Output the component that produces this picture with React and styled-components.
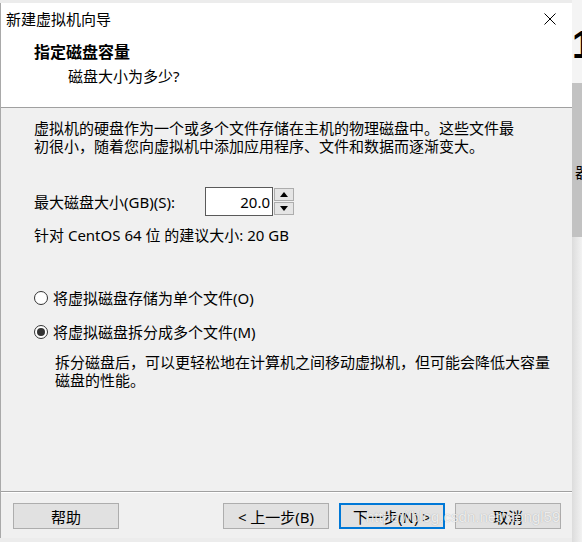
import React from 'react';
import styled, { createGlobalStyle } from 'styled-components';

const GlobalStyle = createGlobalStyle`
    body {
        margin: 0;
        font-family: "Noto Sans", "Noto Sans CJK SC", sans-serif;
        font-size: 15px;
        color: #000;
    }
`

const Page = styled.div`
    position: relative;
    width: 582px;
    height: 542px;
    display: flex;
    background: #ececec;
    overflow: hidden;
`
const Dialog = styled.div`
    margin-top: 3px;
    width: 572px;
    height: 535px;
    box-sizing: border-box;
    border-left: 1px solid #a9a9a9;
    background: #f0f0f0;
    display: flex;
    flex-direction: column;
`
const TitleBar = styled.div`
    height: 32px;
    background: #fff;
    display: flex;
    align-items: center;
    justify-content: space-between;
    padding-left: 5px;
`
const Title = styled.span`
    line-height: 18px;
`
const CloseButton = styled.div`
    width: 44px;
    height: 32px;
    display: flex;
    align-items: center;
    justify-content: center;
`
const Header = styled.div`
    height: 73px;
    box-sizing: border-box;
    background: #fff;
    border-bottom: 1px solid #a0a0a0;
    padding: 7px 0 0 33px;
`
const Heading = styled.div`
    font-weight: 700;
    font-size: 16px;
    line-height: 20px;
`
const SubHeading = styled.div`
    margin: 5px 0 0 34px;
    line-height: 18px;
`
const Body = styled.div`
    flex: 1;
    padding: 11px 0 0 33px;
`
const Text = styled.div`
    line-height: 18px;
    white-space: nowrap;
    margin-top: ${props => props.top || 0}px;
    margin-left: ${props => props.indent || 0}px;
`
const SizeRow = styled.div`
    margin-top: 32px;
    height: 29px;
    display: flex;
    align-items: center;
`
const SizeLabel = styled.span`
    width: 171px;
    white-space: nowrap;
`
const NumberBox = styled.div`
    width: 68px;
    height: 29px;
    box-sizing: border-box;
    border: 1px solid #5a5a5a;
    background: #fff;
    display: flex;
    align-items: center;
    justify-content: flex-end;
    padding-right: 2px;
`
const SpinColumn = styled.div`
    display: flex;
    flex-direction: column;
    gap: 1px;
    margin-left: 1px;
`
const SpinButton = styled.div`
    width: 20px;
    height: 13px;
    box-sizing: border-box;
    border: 1px solid #adadad;
    background: #e5e5e5;
    display: flex;
    align-items: center;
    justify-content: center;
`
const Option = styled.div`
    margin-top: ${props => props.top}px;
    display: flex;
    align-items: center;
    gap: 5px;
    line-height: 18px;
`
const Radio = styled.span`
    width: 14px;
    height: 14px;
    box-sizing: border-box;
    border-radius: 50%;
    border: 1px solid #333;
    background: #fff;
    display: flex;
    align-items: center;
    justify-content: center;
    &::after {
        content: '';
        width: 8px;
        height: 8px;
        border-radius: 50%;
        background: ${props => props.checked ? '#333' : 'transparent'};
    }
`
const Footer = styled.div`
    height: 47px;
    box-sizing: border-box;
    border-top: 1px solid #a0a0a0;
    box-shadow: inset 0 1px 0 #fff;
    padding: 11px 11px 0 12px;
    display: flex;
    gap: 10px;
`
const Button = styled.div`
    width: 106px;
    height: 26px;
    box-sizing: border-box;
    border: ${props => props.focused ? '2px solid #0078d7' : '1px solid #adadad'};
    background: #e1e1e1;
    display: flex;
    align-items: center;
    justify-content: center;
    white-space: nowrap;
    margin-left: ${props => props.push ? 'auto' : '0'};
`
const Watermark = styled.div`
    position: absolute;
    left: 366px;
    top: 508px;
    font-family: "Liberation Sans", sans-serif;
    font-size: 15px;
    color: rgba(255, 255, 255, 0.8);
    text-shadow: 0 0 1px rgba(0, 0, 0, 0.3);
    white-space: nowrap;
`
const Strip = styled.div`
    width: 10px;
    display: flex;
    flex-direction: column;
    overflow: hidden;
`
const StripTop = styled.div`
    height: 83px;
    background: #f4f4f4;
    font-family: "Liberation Sans", sans-serif;
    font-weight: 700;
    font-size: 38px;
    line-height: 38px;
    padding-top: 26px;
    box-sizing: border-box;
    white-space: nowrap;
`
const StripBand = styled.div`
    height: 154px;
    background: #c2c2c2;
    box-sizing: border-box;
    padding: 80px 0 0 3px;
    line-height: 18px;
    white-space: nowrap;
`
const StripRest = styled.div`
    flex: 1;
    background: linear-gradient(to right, #dcdcdc, #f2f2f2);
`

const Arrow = ({ up }) => (
    <svg width="8" height="5" viewBox="0 0 8 5">
        <path d={up ? 'M0 5 L4 0 L8 5 Z' : 'M0 0 L8 0 L4 5 Z'} fill="#000" />
    </svg>
)

const App = () => {
    return (
        <Page>
            <GlobalStyle />
            <Dialog>
                <TitleBar>
                    <Title>新建虚拟机向导</Title>
                    <CloseButton>
                        <svg width="12" height="12" viewBox="0 0 12 12">
                            <path d="M0.5 0.5 L11.5 11.5 M11.5 0.5 L0.5 11.5" stroke="#000" strokeWidth="1" />
                        </svg>
                    </CloseButton>
                </TitleBar>
                <Header>
                    <Heading>指定磁盘容量</Heading>
                    <SubHeading>磁盘大小为多少?</SubHeading>
                </Header>
                <Body>
                    <Text>
                        虚拟机的硬盘作为一个或多个文件存储在主机的物理磁盘中。这些文件最<br />
                        初很小，随着您向虚拟机中添加应用程序、文件和数据而逐渐变大。
                    </Text>
                    <SizeRow>
                        <SizeLabel>最大磁盘大小(GB)(S):</SizeLabel>
                        <NumberBox>20.0</NumberBox>
                        <SpinColumn>
                            <SpinButton><Arrow up /></SpinButton>
                            <SpinButton><Arrow /></SpinButton>
                        </SpinColumn>
                    </SizeRow>
                    <Text top={10}>针对 CentOS 64 位 的建议大小: 20 GB</Text>
                    <Option top={45}>
                        <Radio />
                        <span>将虚拟磁盘存储为单个文件(O)</span>
                    </Option>
                    <Option top={16}>
                        <Radio checked />
                        <span>将虚拟磁盘拆分成多个文件(M)</span>
                    </Option>
                    <Text top={12} indent={21}>
                        拆分磁盘后，可以更轻松地在计算机之间移动虚拟机，但可能会降低大容量<br />
                        磁盘的性能。
                    </Text>
                </Body>
                <Footer>
                    <Button>帮助</Button>
                    <Button push>&lt; 上一步(B)</Button>
                    <Button focused>下一步(N) &gt;</Button>
                    <Button>取消</Button>
                </Footer>
            </Dialog>
            <Strip>
                <StripTop>1</StripTop>
                <StripBand>器</StripBand>
                <StripRest />
            </Strip>
            <Watermark>https://blog.csdn.net/xiongl59</Watermark>
        </Page>
    )
}

export default App;
